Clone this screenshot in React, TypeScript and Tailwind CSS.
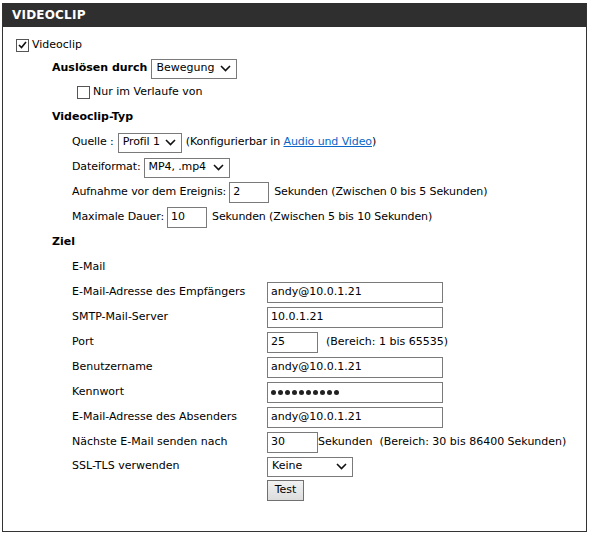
import type { ReactNode } from 'react';

const font = { fontFamily: '"DejaVu Sans", Verdana, sans-serif' };

function Check({ checked = false }: { checked?: boolean }) {
  return (
    <span className="inline-flex w-[13px] h-[13px] items-center justify-center border border-[#555] bg-white shrink-0">
      {checked && (
        <svg width="9" height="8" viewBox="0 0 9 8">
          <path d="M1 4 L3.5 6.5 L8 1" fill="none" stroke="#111" strokeWidth="1.6" />
        </svg>
      )}
    </span>
  );
}

function Select({ value, width }: { value: string; width: string }) {
  return (
    <span className={`inline-flex h-[20px] items-center justify-between border border-[#7a7a7a] bg-white pl-[4px] pr-[5px] ${width}`}>
      <span>{value}</span>
      <svg width="11" height="7" viewBox="0 0 11 7">
        <path d="M1 1 L5.5 5.5 L10 1" fill="none" stroke="#111" strokeWidth="1.6" />
      </svg>
    </span>
  );
}

function Field({ value, width = 'w-[176px]' }: { value?: ReactNode; width?: string }) {
  return (
    <span className={`inline-flex h-[21px] items-center border border-[#7a7a7a] bg-white pl-[3px] ${width}`}>
      {value}
    </span>
  );
}

function Dots() {
  return (
    <span className="flex gap-[2px]">
      {Array.from({ length: 10 }).map((_, i) => (
        <span key={i} className="w-[5px] h-[5px] rounded-full bg-[#222]" />
      ))}
    </span>
  );
}

function MailRow({ label, children, h = 'h-[25px]' }: { label: string; children: ReactNode; h?: string }) {
  return (
    <div className={`flex items-center ${h}`}>
      <span className="w-[195px] pl-[69px] box-content shrink-0">{label}</span>
      <div className="flex items-center">{children}</div>
    </div>
  );
}

export default function App() {
  return (
    <div className="bg-white w-[593px] h-[540px] pt-[3px] pl-[2px] text-[11px] text-black" style={font}>
      <div className="w-[585px] h-[529px] border-x border-b border-[#333]">
        <div className="h-[24px] bg-[#2f2f2f] flex items-center pl-[9px] text-white font-bold text-[12px] tracking-[0.2px]">
          VIDEOCLIP
        </div>

        <div className="pt-[6px] pl-[13px]">
          <div className="flex items-center h-[24px] gap-[3px]">
            <Check checked />
            <span>Videoclip</span>
          </div>

          <div className="flex items-center h-[23px] pl-[36px] gap-[4px]">
            <span className="font-bold">Auslösen durch</span>
            <Select value="Bewegung" width="w-[86px]" />
          </div>

          <div className="flex items-center h-[25px] pl-[61px] gap-[3px]">
            <Check />
            <span>Nur im Verlaufe von</span>
          </div>

          <div className="flex items-center h-[25px] pl-[36px] font-bold">Videoclip-Typ</div>

          <div className="pl-[56px] tracking-[-0.1px]">
            <div className="flex items-center h-[25px] gap-[4px]">
              <span>Quelle :</span>
              <Select value="Profil 1" width="w-[64px]" />
              <span>
                (Konfigurierbar in <span className="text-[#0a66c8] underline">Audio und Video</span>)
              </span>
            </div>
            <div className="flex items-center h-[25px] gap-[3px]">
              <span>Dateiformat:</span>
              <Select value="MP4, .mp4" width="w-[86px]" />
            </div>
            <div className="flex items-center h-[25px] gap-[3px]">
              <span>Aufnahme vor dem Ereignis:</span>
              <Field value="2" width="w-[40px]" />
              <span className="ml-[2px]">Sekunden (Zwischen 0 bis 5 Sekunden)</span>
            </div>
            <div className="flex items-center h-[25px] gap-[3px]">
              <span>Maximale Dauer:</span>
              <Field value="10" width="w-[40px]" />
              <span className="ml-[2px]">Sekunden (Zwischen 5 bis 10 Sekunden)</span>
            </div>
          </div>

          <div className="flex items-center h-[25px] pl-[36px] font-bold">Ziel</div>
        </div>

        <div>
          <div className="flex items-center h-[25px] pl-[69px]">E-Mail</div>
          <MailRow label="E-Mail-Adresse des Empfängers">
            <Field value="andy@10.0.1.21" />
          </MailRow>
          <MailRow label="SMTP-Mail-Server">
            <Field value="10.0.1.21" />
          </MailRow>
          <MailRow label="Port">
            <Field value="25" width="w-[51px]" />
            <span className="ml-[8px]">(Bereich: 1 bis 65535)</span>
          </MailRow>
          <MailRow label="Benutzername">
            <Field value="andy@10.0.1.21" />
          </MailRow>
          <MailRow label="Kennwort">
            <Field value={<Dots />} />
          </MailRow>
          <MailRow label="E-Mail-Adresse des Absenders">
            <Field value="andy@10.0.1.21" />
          </MailRow>
          <MailRow label="Nächste E-Mail senden nach">
            <Field value="30" width="w-[51px]" />
            <span>Sekunden&nbsp;&nbsp;(Bereich: 30 bis 86400 Sekunden)</span>
          </MailRow>
          <MailRow label="SSL-TLS verwenden" h="h-[23px]">
            <Select value="Keine" width="w-[86px]" />
          </MailRow>
          <MailRow label="" h="h-[24px]">
            <button className="h-[21px] w-[37px] border border-[#707070] bg-gradient-to-b from-[#f2f2f2] to-[#dcdcdc] text-[11px]">
              Test
            </button>
          </MailRow>
        </div>
      </div>
    </div>
  );
}
